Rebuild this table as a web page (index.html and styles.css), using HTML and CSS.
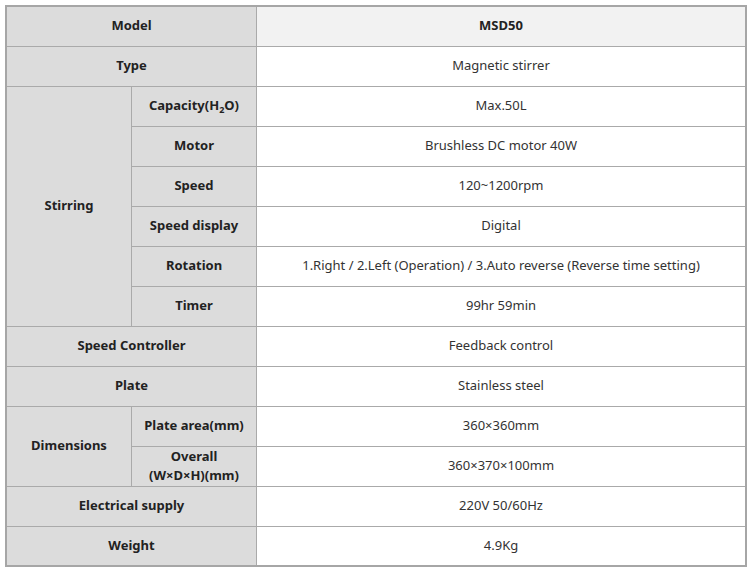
FILE: index.html
```html
<!DOCTYPE html>
<html>
<head>
<meta charset="utf-8">
<link rel="stylesheet" href="styles.css">
</head>
<body>
<div class="wrap">
<table class="spec">
  <colgroup><col class="c1"><col class="c2"><col class="c3"></colgroup>
  <tr><th colspan="2">Model</th><td class="model">MSD50</td></tr>
  <tr><th colspan="2">Type</th><td>Magnetic stirrer</td></tr>
  <tr><th rowspan="6">Stirring</th><th>Capacity(H<sub>2</sub>O)</th><td>Max.50L</td></tr>
  <tr><th>Motor</th><td>Brushless DC motor 40W</td></tr>
  <tr><th>Speed</th><td>120~1200rpm</td></tr>
  <tr><th>Speed display</th><td>Digital</td></tr>
  <tr><th>Rotation</th><td>1.Right / 2.Left (Operation) / 3.Auto reverse (Reverse time setting)</td></tr>
  <tr><th>Timer</th><td>99hr 59min</td></tr>
  <tr><th colspan="2">Speed Controller</th><td>Feedback control</td></tr>
  <tr><th colspan="2">Plate</th><td>Stainless steel</td></tr>
  <tr><th rowspan="2">Dimensions</th><th>Plate area(mm)</th><td>360×360mm</td></tr>
  <tr><th class="two">Overall<br>(W×D×H)(mm)</th><td>360×370×100mm</td></tr>
  <tr><th colspan="2">Electrical supply</th><td>220V 50/60Hz</td></tr>
  <tr class="last"><th colspan="2">Weight</th><td>4.9Kg</td></tr>
</table>
</div>
</body>
</html>
```
FILE: styles.css
```css
html, body { margin: 0; padding: 0; background: #fff; }
.wrap { padding: 5px; }
.spec {
  border-collapse: separate;
  border-spacing: 0;
  border: 2px solid #a6a6a6;
  width: 742px;
  table-layout: fixed;
  font-family: "Noto Sans", "Noto Sans CJK KR", sans-serif;
  font-size: 13px;
}
.c1 { width: 125px; }
.c2 { width: 125px; }
.spec th, .spec td {
  border: 0;
  border-right: 1px solid #aaaaaa;
  border-bottom: 1px solid #aaaaaa;
  height: 35px;
  padding: 0 0 4px 0;
  text-align: center;
  vertical-align: middle;
  line-height: 18px;
}
.spec td { border-right: 0; color: #333; font-weight: normal; }
.spec th { background: #dcdcdc; color: #222; font-weight: bold; }
.spec td.model { background: #f2f2f2; color: #222; font-weight: bold; }
.spec .last th, .spec .last td { border-bottom: 0; height: 35px; padding-bottom: 3px; }
.spec th.two { line-height: 19px; padding-bottom: 1px; height: 38px; }
.spec sub { font-size: 9px; line-height: 0; vertical-align: -3px; }
```
